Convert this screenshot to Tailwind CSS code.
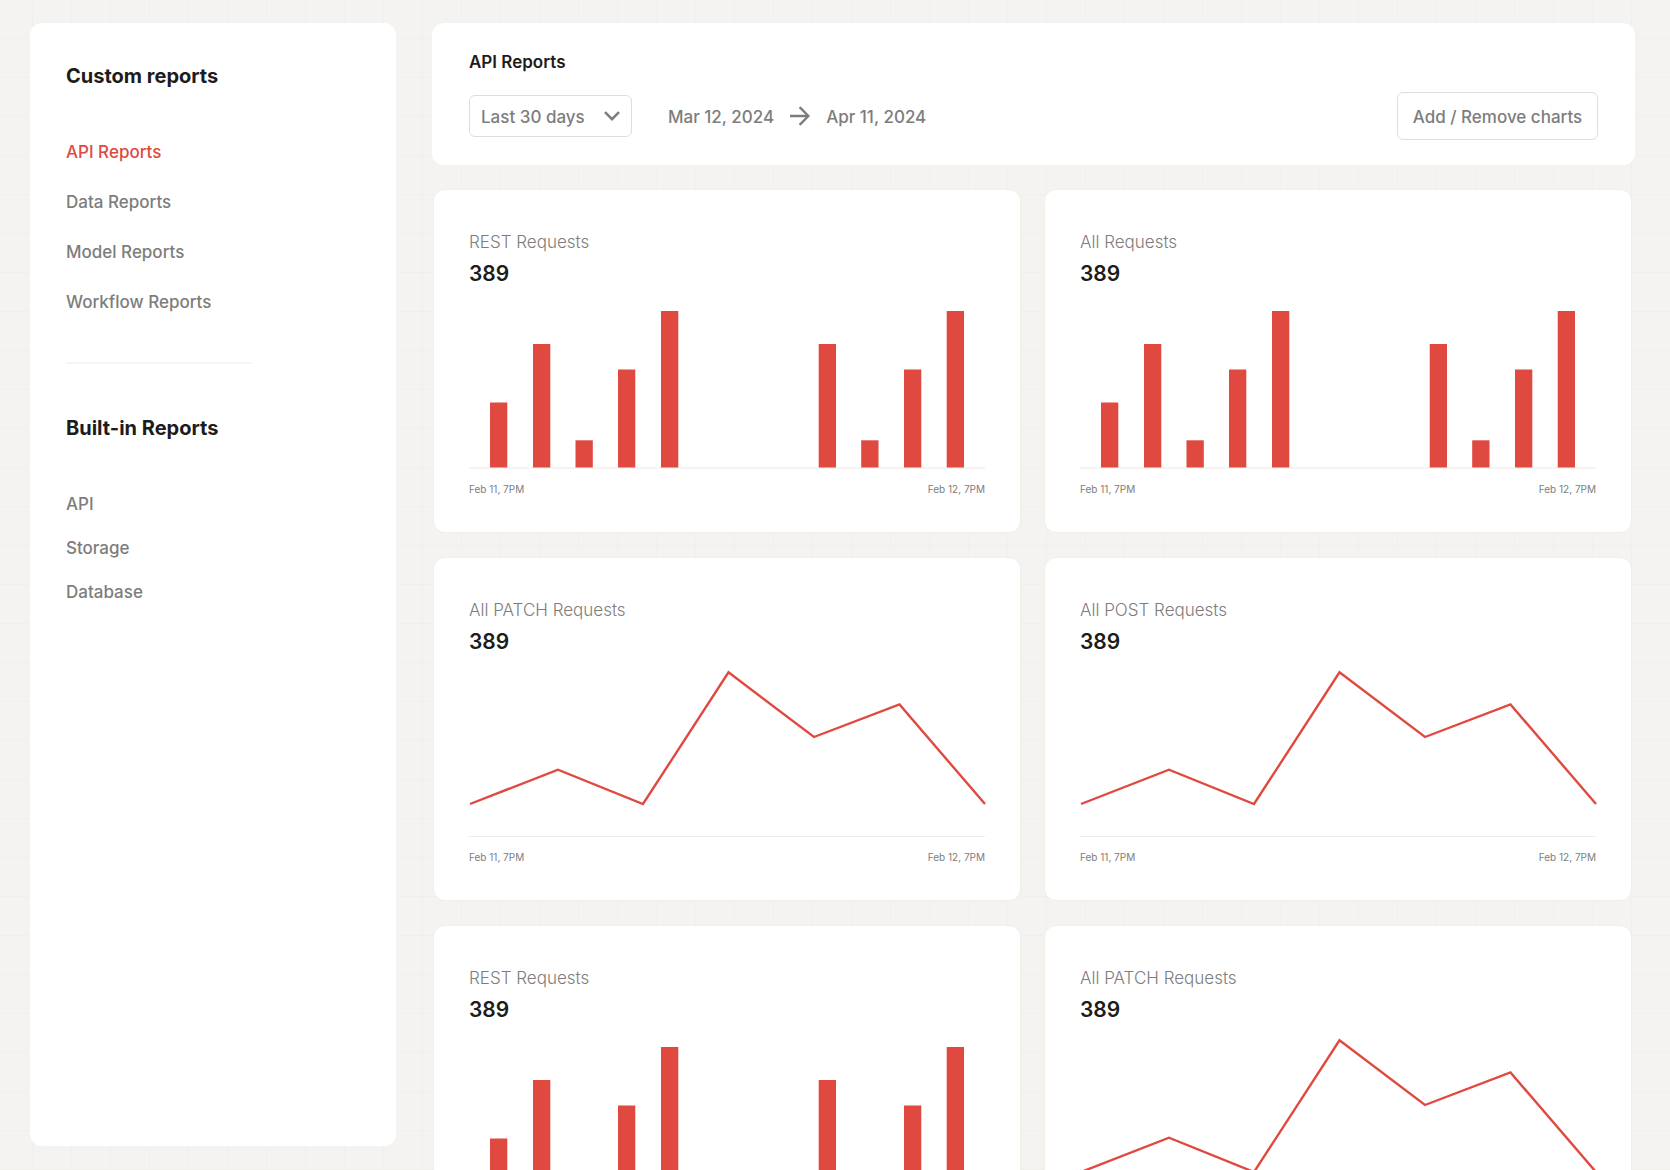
<!DOCTYPE html>
<html lang="en">
<head>
<meta charset="utf-8">
<meta name="viewport" content="width=device-width, initial-scale=1">
<title>API Reports</title>
<script src="https://cdn.jsdelivr.net/npm/@tailwindcss/browser@4"></script>
</head>
<body class="h-screen overflow-hidden bg-[#f4f3f1] bg-[linear-gradient(to_right,#f0efec_1px,transparent_1px),linear-gradient(to_bottom,#f0efec_1px,transparent_1px)] bg-[length:39px_39px] bg-[position:32px_38px] font-['Inter',sans-serif] text-[17px] leading-6 font-medium text-[#7d7d7d]">

<!-- Shared chart drawings -->
<svg class="hidden" aria-hidden="true">
  <defs>
    <g id="bar-chart">
      <rect x="0" y="167" width="516" height="2" fill="#f6f4f0"/>
      <g fill="#e04940">
        <rect x="21" y="102.5" width="17.3" height="65"/>
        <rect x="64" y="44" width="17.3" height="123.5"/>
        <rect x="106.5" y="140.3" width="17.3" height="27.2"/>
        <rect x="149" y="69.5" width="17.3" height="98"/>
        <rect x="192" y="11" width="17.3" height="156.5"/>
        <rect x="349.7" y="44" width="17.3" height="123.5"/>
        <rect x="392.2" y="140.3" width="17.3" height="27.2"/>
        <rect x="435" y="69.5" width="17.3" height="98"/>
        <rect x="477.7" y="11" width="17.3" height="156.5"/>
      </g>
    </g>
    <g id="line-chart">
      <rect x="0" y="168" width="516" height="1" fill="#f3ece6"/>
      <polyline points="1,136 89,101.7 174,136 259.5,4.3 345,69 430.5,36.5 516,136" fill="none" stroke="#e04940" stroke-width="2.4" stroke-linejoin="miter" vector-effect="non-scaling-stroke"/>
    </g>
  </defs>
</svg>

<div class="flex h-full gap-9 pt-[23px] pr-[35px] pl-[30px]">

  <aside class="mb-6 w-[366px] shrink-0 rounded-xl bg-white px-9 pt-[39px]">
    <h2 id="custom" class="text-xl leading-7 font-bold text-[#1c1c1c]">Custom reports</h2>
    <nav aria-labelledby="custom" class="mt-[50px] flex flex-col items-start gap-[26px]">
      <a href="#" aria-current="page" class="text-[#e04940]">API Reports</a>
      <a href="#">Data Reports</a>
      <a href="#">Model Reports</a>
      <a href="#">Workflow Reports</a>
    </nav>
    <hr class="mt-12 w-[186px] border-t-2 border-[#f6f5f2]">
    <h2 id="builtin" class="mt-[50px] text-xl leading-7 font-bold text-[#1c1c1c]">Built-in Reports</h2>
    <nav aria-labelledby="builtin" class="mt-[50px] flex flex-col items-start gap-5">
      <a href="#">API</a>
      <a href="#">Storage</a>
      <a href="#">Database</a>
    </nav>
  </aside>

  <main class="min-w-0 flex-1 overflow-y-auto rounded-t-xl [scrollbar-width:none]">
    <header class="rounded-xl bg-white px-[37px] pt-[27px] pb-[25px]">
      <h1 class="font-semibold text-[#1c1c1c]">API Reports</h1>
      <div class="mt-[18px] flex items-center">
        <div class="relative">
          <select aria-label="Date range" class="h-[42px] w-[163px] appearance-none rounded-md border border-[#dedede] bg-white pt-0.5 pr-9 pl-[11px]">
            <option>Last 30 days</option>
          </select>
          <svg class="pointer-events-none absolute top-1/2 right-[11px] h-3 w-[18px] -translate-y-1/2" viewBox="0 0 18 12" fill="none" stroke="#7d7d7d" stroke-width="2.5" aria-hidden="true"><path d="M2 2.2 9 9.2 16 2.2"/></svg>
        </div>
        <div class="ml-9 flex items-center gap-4">
          <span class="pt-0.5">Mar 12, 2024</span>
          <svg class="h-5 w-5" viewBox="0 0 20 20" fill="none" stroke="#7d7d7d" stroke-width="2.4" aria-hidden="true"><path d="M0 10H18M9.6 1.2 18.4 10 9.6 18.8"/></svg>
          <span class="pt-0.5">Apr 11, 2024</span>
        </div>
        <button type="button" class="ml-auto h-12 w-[201px] rounded-md border border-[#dedede] bg-white pt-0.5">Add / Remove charts</button>
      </div>
    </header>

    <div class="mt-6 mr-[3px] ml-px grid grid-cols-2 gap-x-[23px] gap-y-6">

      <section class="rounded-xl border border-[#f3eee7] bg-white px-[35px] pt-10 pb-[35px]">
        <h3 class="font-light">REST Requests</h3>
        <p class="mt-1.5 text-[21px] leading-7 font-semibold text-[#1c1c1c]">389</p>
        <svg class="mt-3 block h-[169px] w-full" viewBox="0 0 516 169" preserveAspectRatio="none" role="img" aria-label="Bar chart"><use href="#bar-chart"/></svg>
        <div class="mt-3 flex justify-between text-[10px] leading-4 font-normal"><span>Feb 11, 7PM</span><span>Feb 12, 7PM</span></div>
      </section>

      <section class="rounded-xl border border-[#f3eee7] bg-white px-[35px] pt-10 pb-[35px]">
        <h3 class="font-light">All Requests</h3>
        <p class="mt-1.5 text-[21px] leading-7 font-semibold text-[#1c1c1c]">389</p>
        <svg class="mt-3 block h-[169px] w-full" viewBox="0 0 516 169" preserveAspectRatio="none" role="img" aria-label="Bar chart"><use href="#bar-chart"/></svg>
        <div class="mt-3 flex justify-between text-[10px] leading-4 font-normal"><span>Feb 11, 7PM</span><span>Feb 12, 7PM</span></div>
      </section>

      <section class="rounded-xl border border-[#f3eee7] bg-white px-[35px] pt-10 pb-[35px]">
        <h3 class="font-light">All PATCH Requests</h3>
        <p class="mt-1.5 text-[21px] leading-7 font-semibold text-[#1c1c1c]">389</p>
        <svg class="mt-3 block h-[169px] w-full overflow-visible" viewBox="0 0 516 169" preserveAspectRatio="none" role="img" aria-label="Line chart"><use href="#line-chart"/></svg>
        <div class="mt-3 flex justify-between text-[10px] leading-4 font-normal"><span>Feb 11, 7PM</span><span>Feb 12, 7PM</span></div>
      </section>

      <section class="rounded-xl border border-[#f3eee7] bg-white px-[35px] pt-10 pb-[35px]">
        <h3 class="font-light">All POST Requests</h3>
        <p class="mt-1.5 text-[21px] leading-7 font-semibold text-[#1c1c1c]">389</p>
        <svg class="mt-3 block h-[169px] w-full overflow-visible" viewBox="0 0 516 169" preserveAspectRatio="none" role="img" aria-label="Line chart"><use href="#line-chart"/></svg>
        <div class="mt-3 flex justify-between text-[10px] leading-4 font-normal"><span>Feb 11, 7PM</span><span>Feb 12, 7PM</span></div>
      </section>

      <section class="rounded-xl border border-[#f3eee7] bg-white px-[35px] pt-10 pb-[35px]">
        <h3 class="font-light">REST Requests</h3>
        <p class="mt-1.5 text-[21px] leading-7 font-semibold text-[#1c1c1c]">389</p>
        <svg class="mt-3 block h-[169px] w-full" viewBox="0 0 516 169" preserveAspectRatio="none" role="img" aria-label="Bar chart"><use href="#bar-chart"/></svg>
        <div class="mt-3 flex justify-between text-[10px] leading-4 font-normal"><span>Feb 11, 7PM</span><span>Feb 12, 7PM</span></div>
      </section>

      <section class="rounded-xl border border-[#f3eee7] bg-white px-[35px] pt-10 pb-[35px]">
        <h3 class="font-light">All PATCH Requests</h3>
        <p class="mt-1.5 text-[21px] leading-7 font-semibold text-[#1c1c1c]">389</p>
        <svg class="mt-3 block h-[169px] w-full overflow-visible" viewBox="0 0 516 169" preserveAspectRatio="none" role="img" aria-label="Line chart"><use href="#line-chart"/></svg>
        <div class="mt-3 flex justify-between text-[10px] leading-4 font-normal"><span>Feb 11, 7PM</span><span>Feb 12, 7PM</span></div>
      </section>

    </div>
  </main>
</div>
</body>
</html>
